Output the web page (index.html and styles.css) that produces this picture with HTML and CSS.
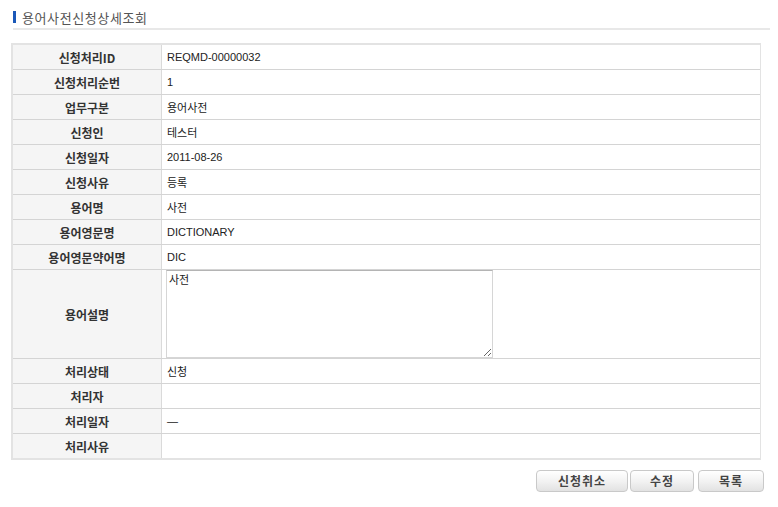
FILE: index.html
```html
<!DOCTYPE html>
<html lang="ko">
<head>
<meta charset="utf-8">
<title>용어사전신청상세조회</title>
<link rel="stylesheet" href="styles.css">
</head>
<body>
<div class="page">
  <h1 class="title"><span class="title-bar"></span>용어사전신청상세조회</h1>

  <div class="detail">
    <div class="row"><div class="th">신청처리ID</div><div class="td">REQMD-00000032</div></div>
    <div class="row"><div class="th">신청처리순번</div><div class="td">1</div></div>
    <div class="row"><div class="th">업무구분</div><div class="td">용어사전</div></div>
    <div class="row"><div class="th">신청인</div><div class="td">테스터</div></div>
    <div class="row"><div class="th">신청일자</div><div class="td">2011-08-26</div></div>
    <div class="row"><div class="th">신청사유</div><div class="td">등록</div></div>
    <div class="row"><div class="th">용어명</div><div class="td">사전</div></div>
    <div class="row"><div class="th">용어영문명</div><div class="td">DICTIONARY</div></div>
    <div class="row"><div class="th">용어영문약어명</div><div class="td">DIC</div></div>
    <div class="row row-tall"><div class="th">용어설명</div><div class="td td-area"><textarea class="desc" readonly>사전</textarea></div></div>
    <div class="row"><div class="th">처리상태</div><div class="td">신청</div></div>
    <div class="row"><div class="th">처리자</div><div class="td"></div></div>
    <div class="row"><div class="th">처리일자</div><div class="td">—</div></div>
    <div class="row row-last"><div class="th">처리사유</div><div class="td"></div></div>
  </div>

  <div class="actions">
    <button class="btn btn-wide" type="button">신청취소</button>
    <button class="btn" type="button">수정</button>
    <button class="btn btn-list" type="button">목록</button>
  </div>
</div>
</body>
</html>
```

FILE: styles.css
```css
* { box-sizing: border-box; }

body {
  margin: 0;
  background: #fff;
  font-family: "Liberation Sans", "Noto Sans CJK KR", sans-serif;
  color: #222;
}

.page {
  padding: 8px 0 0 11px;
  width: 778px;
}

/* heading with blue marker and thin rule */
.title {
  margin: 0 8px 0 2px;
  height: 18px;
  display: flex;
  align-items: center;
  gap: 6px;
  font-family: "Noto Sans CJK KR", sans-serif;
  font-size: 13px;
  font-weight: normal;
  letter-spacing: 0.6px;
  color: #555;
  line-height: 1;
  border-bottom: 2px solid #e8e8e8;
  padding-bottom: 2px;
  box-sizing: content-box;
}

.title-bar {
  display: block;
  width: 3px;
  height: 12px;
  background: #1b58b8;
}

/* detail grid */
.detail {
  margin-top: 13px;
  width: 750px;
  border: 2px solid #e3e3e3;
  border-right-width: 1px;
}

.row {
  display: grid;
  grid-template-columns: 149px 1fr;
  height: 25px;
  border-bottom: 1px solid #d4d4d4;
}

.row-tall { height: 89px; }
.row-last { border-bottom: none; height: 24px; }

.th {
  background: #f5f5f5;
  border-right: 1px solid #dadada;
  display: flex;
  align-items: center;
  justify-content: center;
  font-family: "Noto Sans CJK KR", sans-serif;
  font-size: 12px;
  font-weight: bold;
  color: #333;
}

.td {
  display: flex;
  align-items: center;
  padding-left: 5px;
  font-size: 11px;
  color: #222;
}

.td-area {
  align-items: flex-start;
  padding: 0 0 0 4px;
}

.desc {
  width: 327px;
  height: 88px;
  margin: 0;
  padding: 2px 2px;
  border: 1px solid #d6d6d6;
  border-top-color: #b4b4b4;
  font-family: "Noto Sans CJK KR", sans-serif;
  font-size: 11px;
  line-height: 13px;
  color: #222;
  resize: both;
  outline: none;
}

/* buttons */
.actions {
  display: flex;
  justify-content: flex-end;
  gap: 2px;
  width: 753px;
  margin-top: 10px;
}

.btn {
  width: 64px;
  height: 22px;
  padding: 0;
  border: 1px solid #c9c9c9;
  border-radius: 4px;
  background: linear-gradient(#ffffff, #f1f1f1 55%, #e2e2e2);
  font-family: "Noto Sans CJK KR", sans-serif;
  font-size: 12px;
  font-weight: bold;
  letter-spacing: 1px;
  color: #444;
  line-height: 20px;
}

.btn-wide { width: 92px; }
.btn-list { width: 66px; margin-left: 2px; }
```
